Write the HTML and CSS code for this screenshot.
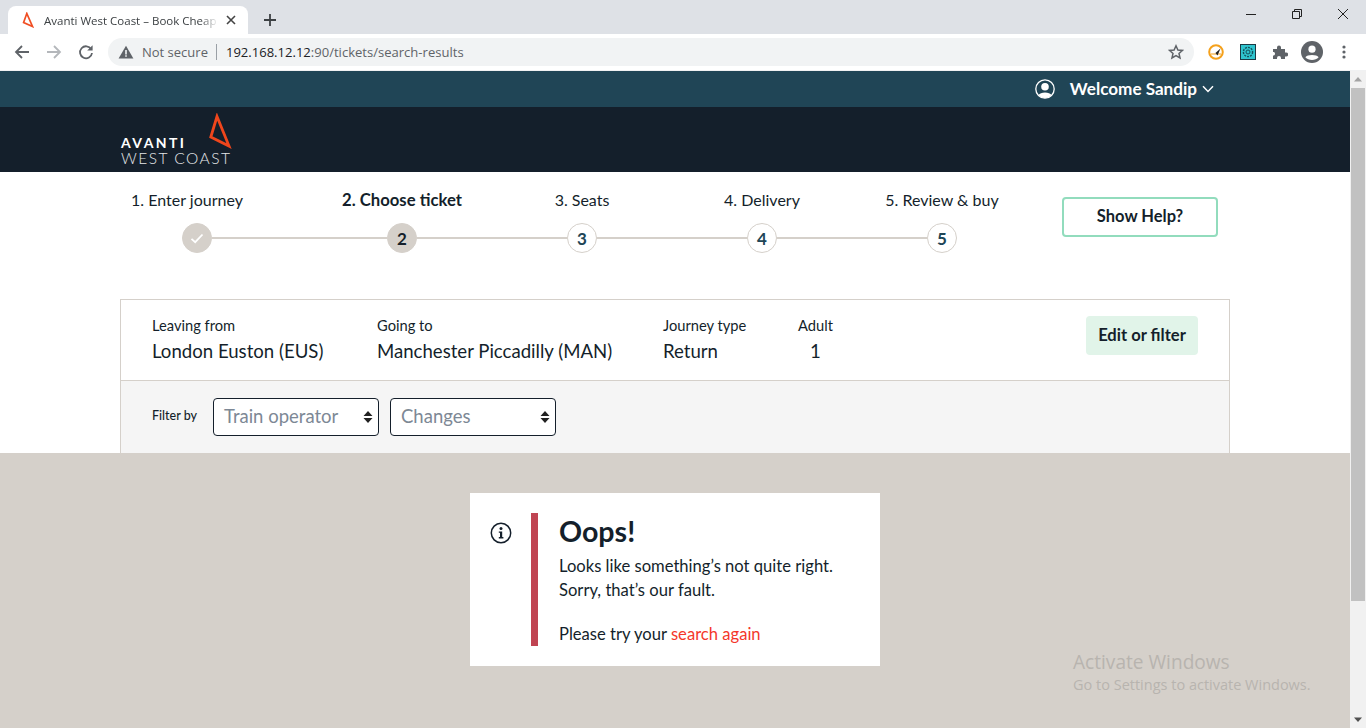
FILE: index.html
```html
<!DOCTYPE html>
<html lang="en">
<head>
  <meta charset="UTF-8">
  <title>Avanti West Coast – Book Cheap Train Tickets</title>
  <link rel="stylesheet" href="styles.css">
</head>
<body>
  <div class="tabbar">
    <div class="tab">
      <svg class="favicon" width="12" height="16" viewBox="0 0 12 16"><path d="M4.8 1.5 1.6 10.5 10.5 14.5Z" fill="none" stroke="#f04e23" stroke-width="1.7"/></svg>
      <span class="tab-title">Avanti West Coast – Book Cheap</span>
      <svg class="tab-close" width="10" height="10" viewBox="0 0 10 10"><path d="M1 1 9 9M9 1 1 9" stroke="#444" stroke-width="1.6"/></svg>
    </div>
    <svg class="new-tab" width="14" height="14" viewBox="0 0 14 14"><path d="M7 1V13M1 7H13" stroke="#3c4043" stroke-width="1.8"/></svg>
    <div class="win-controls">
      <svg width="12" height="12" viewBox="0 0 12 12"><path d="M1 6.5H11" stroke="#222" stroke-width="1"/></svg>
      <svg width="12" height="12" viewBox="0 0 12 12"><path d="M1.5 3.5H8.5V10.5H1.5ZM3.5 3.5V1.5H10.5V8.5H8.5" fill="none" stroke="#222" stroke-width="1"/></svg>
      <svg width="12" height="12" viewBox="0 0 12 12"><path d="M1 1 11 11M11 1 1 11" stroke="#222" stroke-width="1"/></svg>
    </div>
  </div>

  <div class="toolbar">
    <svg class="nav-icon" width="16" height="16" viewBox="0 0 16 16"><path d="M15 8H2M8 2 2 8 8 14" fill="none" stroke="#5f6368" stroke-width="1.8"/></svg>
    <svg class="nav-icon" width="16" height="16" viewBox="0 0 16 16"><path d="M1 8H14M8 2 14 8 8 14" fill="none" stroke="#b4b7bb" stroke-width="1.8"/></svg>
    <svg class="nav-icon" width="16" height="16" viewBox="0 0 16 16"><path d="M13.2 5.2A6 6 0 1 0 14 9" fill="none" stroke="#5f6368" stroke-width="1.8"/><path d="M14.6 1.2V6.6H9.2Z" fill="#5f6368"/></svg>
    <div class="omnibox">
      <svg width="16" height="14" viewBox="0 0 16 14"><path d="M8 .8 15.4 13.4H.6Z" fill="#5f6368"/><path d="M7.2 5H8.8V9.4H7.2ZM7.2 10.2H8.8V11.8H7.2Z" fill="#f1f3f4"/></svg>
      <span class="not-secure">Not secure</span>
      <span class="omni-sep"></span>
      <span class="url">192.168.12.12<span class="url-dim">:90/tickets/search-results</span></span>
      <svg class="star" width="16" height="16" viewBox="0 0 16 16"><path d="M8 1.8 9.9 6 14.4 6.4 11 9.4 12 13.9 8 11.5 4 13.9 5 9.4 1.6 6.4 6.1 6Z" fill="none" stroke="#5f6368" stroke-width="1.5"/></svg>
    </div>
    <div class="ext-icons">
      <svg width="16" height="16" viewBox="0 0 16 16"><circle cx="8" cy="8" r="6.8" fill="#fff" stroke="#f5a11c" stroke-width="2"/><path d="M3 10H13" stroke="#f5a11c" stroke-width="1"/><path d="M3.5 12.5 12.5 4.5 9.5 11.5 7.5 9Z" fill="#222"/></svg>
      <svg width="16" height="16" viewBox="0 0 16 16"><rect x=".5" y=".5" width="15" height="15" fill="#2fc4ce" stroke="#1c3a44"/><circle cx="8" cy="8" r="4.6" fill="none" stroke="#14505a" stroke-width="1.4" stroke-dasharray="2 1"/><circle cx="8" cy="8" r="2" fill="none" stroke="#14505a"/></svg>
      <svg width="16" height="16" viewBox="0 0 16 16"><path d="M1 5H5V3.5A2 2 0 0 1 9 3.5V5H13V8.5H14.2A2 2 0 0 1 14.2 12.5H13V15H9V14A2 2 0 0 0 5 14V15H1V11.5H2A2 2 0 0 0 2 8H1Z" fill="#5f6368"/></svg>
      <svg width="22" height="22" viewBox="0 0 22 22"><circle cx="11" cy="11" r="11" fill="#5f6368"/><circle cx="11" cy="8.2" r="3.6" fill="#fff"/><path d="M4.4 16.2C6 13.4 16 13.4 17.6 16.2 16 18 13.6 19 11 19S6 18 4.4 16.2Z" fill="#fff"/></svg>
      <svg width="4" height="14" viewBox="0 0 4 14"><circle cx="2" cy="2" r="1.6" fill="#5f6368"/><circle cx="2" cy="7" r="1.6" fill="#5f6368"/><circle cx="2" cy="12" r="1.6" fill="#5f6368"/></svg>
    </div>
  </div>

  <div class="viewport">
    <div class="page">
      <div class="topbar">
        <svg width="20" height="20" viewBox="0 0 20 20"><circle cx="10" cy="10" r="9.2" fill="none" stroke="#fff" stroke-width="1.3"/><circle cx="10" cy="7.8" r="3.8" fill="#fff"/><path d="M3.6 16C5 12.6 15 12.6 16.4 16 14.8 18 12.6 19 10 19S5.2 18 3.6 16Z" fill="#fff"/></svg>
        <span class="welcome">Welcome Sandip</span>
        <svg width="12" height="8" viewBox="0 0 12 8"><path d="M1 1.2 6 6.4 11 1.2" fill="none" stroke="#fff" stroke-width="1.5"/></svg>
      </div>

      <header class="brandbar">
        <div class="logo">
          <div class="logo-top">
            <span class="logo-avanti">AVANTI</span>
            <svg class="logo-mark" width="24" height="36" viewBox="0 0 24 36"><path d="M9 3.5 2.8 24 21 33Z" fill="none" stroke="#f0461c" stroke-width="2.8"/></svg>
          </div>
          <div class="logo-west">WEST COAST</div>
        </div>
      </header>

      <div class="stepper">
        <div class="steps">
          <div class="step-labels">
            <span class="step-label first">1. Enter journey</span>
            <span class="step-label current">2. Choose ticket</span>
            <span class="step-label">3. Seats</span>
            <span class="step-label">4. Delivery</span>
            <span class="step-label">5. Review &amp; buy</span>
          </div>
          <div class="step-track">
            <span class="dot done">
              <svg width="14" height="11" viewBox="0 0 14 11"><path d="M1.5 5.8 5.2 9.2 12.5 1.5" fill="none" stroke="#fff" stroke-width="1.8"/></svg>
            </span>
            <span class="line long"></span>
            <span class="dot active">2</span>
            <span class="line"></span>
            <span class="dot">3</span>
            <span class="line"></span>
            <span class="dot">4</span>
            <span class="line"></span>
            <span class="dot">5</span>
          </div>
        </div>
        <button class="help-btn">Show Help?</button>
      </div>

      <section class="summary">
        <div class="summary-top">
          <div class="field from">
            <span class="field-label">Leaving from</span>
            <span class="field-value">London Euston (EUS)</span>
          </div>
          <div class="field to">
            <span class="field-label">Going to</span>
            <span class="field-value">Manchester Piccadilly (MAN)</span>
          </div>
          <div class="field type">
            <span class="field-label">Journey type</span>
            <span class="field-value">Return</span>
          </div>
          <div class="field adult">
            <span class="field-label">Adult</span>
            <span class="field-value">1</span>
          </div>
          <button class="edit-btn">Edit or filter</button>
        </div>
        <div class="summary-filter">
          <span class="filter-label">Filter by</span>
          <div class="select">
            <span>Train operator</span>
            <svg width="10" height="14" viewBox="0 0 10 14"><path d="M5 1 9.5 6H.5ZM5 13 .5 8H9.5Z" fill="#222"/></svg>
          </div>
          <div class="select">
            <span>Changes</span>
            <svg width="10" height="14" viewBox="0 0 10 14"><path d="M5 1 9.5 6H.5ZM5 13 .5 8H9.5Z" fill="#222"/></svg>
          </div>
        </div>
      </section>

      <div class="error-area">
        <div class="alert">
          <svg class="alert-icon" width="22" height="22" viewBox="0 0 22 22"><circle cx="11" cy="11" r="9.7" fill="none" stroke="#141f2b" stroke-width="1.5"/><circle cx="11" cy="6.6" r="1.5" fill="#141f2b"/><path d="M8.8 9.4H12.2V15H13.4V16.4H8.8V15H10V10.8H8.8Z" fill="#141f2b"/></svg>
          <div class="alert-body">
            <h1>Oops!</h1>
            <p>Looks like something’s not quite right.<br>Sorry, that’s our fault.</p>
            <p>Please try your <a href="#">search again</a></p>
          </div>
        </div>
      </div>
    </div>

    <div class="scrollbar">
      <svg width="16" height="17" viewBox="0 0 16 17"><path d="M8 6 12 10.5H4Z" fill="#a3a3a3"/></svg>
      <div class="scroll-thumb"></div>
      <div class="scroll-rest"></div>
      <svg width="16" height="17" viewBox="0 0 16 17"><path d="M8 11 4 6.5H12Z" fill="#505050"/></svg>
    </div>

    <div class="watermark">
      <div class="wm-title">Activate Windows</div>
      <div class="wm-sub">Go to Settings to activate Windows.</div>
    </div>
  </div>
</body>
</html>
```

FILE: styles.css
```css
* {
  box-sizing: border-box;
}
html, body {
  margin: 0;
  height: 728px;
  overflow: hidden;
}
body {
  display: flex;
  flex-direction: column;
  font-family: Lato, "Noto Sans", sans-serif;
  color: #141f2b;
  background: #fff;
}

/* browser chrome */
.tabbar {
  height: 34px;
  background: #dee1e6;
  display: flex;
  align-items: flex-end;
  padding-left: 8px;
  font-family: "Open Sans", "Noto Sans", sans-serif;
}
.tab {
  width: 240px;
  height: 28px;
  background: #fff;
  border-radius: 8px 8px 0 0;
  display: flex;
  align-items: center;
  padding: 0 8px 0 14px;
}
.favicon {
  flex: none;
}
.tab-title {
  width: 174px;
  margin-left: 10px;
  font-size: 11.5px;
  color: #3c4043;
  white-space: nowrap;
  -webkit-mask-image: linear-gradient(to right, #000 90%, transparent);
  mask-image: linear-gradient(to right, #000 90%, transparent);
}
.tab-close {
  margin-left: 8px;
  flex: none;
}
.new-tab {
  margin: 0 0 7px 15px;
}
.win-controls {
  margin-left: auto;
  height: 34px;
  display: flex;
  align-items: center;
  gap: 34px;
  padding: 0 17px 6px 0;
}
.toolbar {
  height: 37px;
  background: #fff;
  display: flex;
  align-items: center;
  padding: 0 0 1px 14px;
  border-bottom: 1px solid #f0f1f2;
}
.nav-icon {
  margin-right: 16px;
}
.nav-icon + .nav-icon + .nav-icon {
  margin-right: 14px;
}
.omnibox {
  width: 1086px;
  height: 28px;
  background: #f1f3f4;
  border-radius: 14px;
  display: flex;
  align-items: center;
  padding: 0 10px;
  font-family: "Open Sans", "Noto Sans", sans-serif;
  font-size: 13px;
}
.not-secure {
  margin-left: 8px;
  color: #5f6368;
}
.omni-sep {
  width: 1px;
  height: 16px;
  background: #9aa0a6;
  margin: 0 9px 0 8px;
}
.url {
  color: #202124;
  font-size: 13.05px;
}
.url-dim {
  color: #5f6368;
}
.star {
  margin-left: auto;
}
.ext-icons {
  display: flex;
  align-items: center;
  margin-left: 14px;
  gap: 16px;
}
.ext-icons svg:nth-child(4) {
  margin-left: -3px;
}
.ext-icons svg:nth-child(5) {
  margin-left: 3px;
}

/* page */
.viewport {
  flex: 1;
  display: flex;
  position: relative;
  min-height: 0;
}
.page {
  width: 1350px;
  display: flex;
  flex-direction: column;
}
.scrollbar {
  width: 16px;
  background: #f1f1f1;
  display: flex;
  flex-direction: column;
  align-items: center;
}
.scrollbar svg {
  flex: none;
}
.scroll-thumb {
  width: 14px;
  height: 513px;
  background: #c1c1c1;
}
.scroll-rest {
  flex: 1;
}
.topbar {
  height: 36px;
  background: #204556;
  display: flex;
  align-items: center;
  justify-content: flex-end;
  padding-right: 136px;
  color: #fff;
}
.welcome {
  margin: 0 5px 2px 15px;
  font-weight: 700;
  font-size: 17.1px;
}
.brandbar {
  height: 65px;
  background: #141f2b;
  padding-left: 121px;
}
.logo {
  width: 112px;
  color: #fff;
  height: 65px;
}
.logo-top {
  display: flex;
  align-items: flex-end;
  height: 44px;
}
.logo-avanti {
  font-size: 14px;
  font-weight: 700;
  letter-spacing: 2.4px;
  line-height: 16px;
}
.logo-mark {
  margin: 0 0 2px 22px;
  flex: none;
}
.logo-west {
  margin-top: -2px;
  font-size: 15.5px;
  font-weight: 300;
  letter-spacing: 1.5px;
  line-height: 18px;
  white-space: nowrap;
  color: #e4e6e8;
}
.stepper {
  height: 127px;
  padding: 18px 0 0 62px;
  display: flex;
  align-items: flex-start;
}
.steps {
  width: 970px;
}
.step-labels {
  display: grid;
  grid-template-columns: 250px 180px 180px 180px 180px;
  height: 33px;
  text-align: center;
  font-size: 16px;
  line-height: 20px;
}
.step-label.current {
  font-size: 16.7px;
  font-weight: 700;
}
.step-track {
  display: flex;
  align-items: center;
  padding-left: 120px;
}
.dot {
  flex: none;
  width: 30px;
  height: 30px;
  border-radius: 50%;
  border: 1px solid #d5d0ca;
  background: #fff;
  display: flex;
  align-items: center;
  justify-content: center;
  font-size: 17px;
  font-weight: 700;
  color: #204556;
}
.dot.done, .dot.active {
  background: #d5d0ca;
  color: #141f2b;
}
.line {
  width: 150px;
  height: 2px;
  background: #d5d0ca;
}
.line.long {
  width: 175px;
}
.help-btn {
  width: 156px;
  height: 40px;
  margin: 7px 0 0 30px;
  padding: 0 0 3px;
  background: #fff;
  border: 2px solid #92dcbd;
  border-radius: 4px;
  font-family: inherit;
  font-size: 16.5px;
  font-weight: 700;
  color: #141f2b;
}
.summary {
  width: 1110px;
  margin-left: 120px;
  border: 1px solid #d5d0ca;
  border-bottom: 0;
}
.summary-top {
  height: 81px;
  display: flex;
  align-items: center;
  padding: 0 31px;
  border-bottom: 1px solid #d5d0ca;
}
.field {
  display: flex;
  flex-direction: column;
  gap: 5px;
  padding-bottom: 1px;
}
.field.from {
  width: 225px;
}
.field.to {
  width: 286px;
}
.field.type {
  width: 135px;
}
.field.adult {
  text-align: center;
}
.field-label {
  font-size: 14.7px;
  line-height: 17px;
}
.field-value {
  font-size: 18.6px;
  line-height: 24px;
}
.edit-btn {
  width: 112px;
  height: 39px;
  margin: 0 0 10px auto;
  padding: 0 0 1px;
  background: #e1f4e9;
  border: 0;
  border-radius: 4px;
  font-family: inherit;
  font-size: 16.6px;
  font-weight: 700;
  color: #141f2b;
}
.summary-filter {
  height: 72px;
  background: #f5f5f5;
  display: flex;
  align-items: center;
  padding-left: 31px;
  gap: 11px;
}
.filter-label {
  width: 50px;
  padding-bottom: 3px;
  font-size: 12.5px;
  font-weight: 500;
  white-space: nowrap;
}
.select {
  width: 166px;
  height: 38px;
  background: #fff;
  border: 1px solid #141f2b;
  border-radius: 4px;
  display: flex;
  align-items: center;
  justify-content: space-between;
  padding: 0 5px 3px 10px;
  font-size: 18.5px;
  color: #7d8895;
}
.select svg {
  margin-top: 3px;
}
.error-area {
  flex: 1;
  background: #d5d0ca;
  display: flex;
  justify-content: center;
  padding: 40px 0 0 0;
}
.alert {
  width: 410px;
  height: 173px;
  background: #fff;
  padding: 20px 0 20px 20px;
  display: flex;
  align-items: flex-start;
}
.alert-icon {
  flex: none;
  margin-top: 9px;
}
.alert-body {
  height: 133px;
  margin-left: 19px;
  padding-left: 21px;
  border-left: 7px solid #c04452;
}
.alert-body h1 {
  margin: 0;
  font-size: 28.6px;
  line-height: 36px;
  font-weight: 700;
}
.alert-body p {
  margin: 5px 0 20px;
  font-size: 16.6px;
  line-height: 24px;
}
.alert-body a {
  color: #f4372c;
  text-decoration: none;
}
.watermark {
  position: absolute;
  left: 1073px;
  top: 578px;
  font-family: "Open Sans", "Noto Sans", sans-serif;
  color: #b8b4af;
  pointer-events: none;
}
.wm-title {
  font-size: 19.1px;
  line-height: 26px;
}
.wm-sub {
  font-size: 14.5px;
  line-height: 19px;
}
```
